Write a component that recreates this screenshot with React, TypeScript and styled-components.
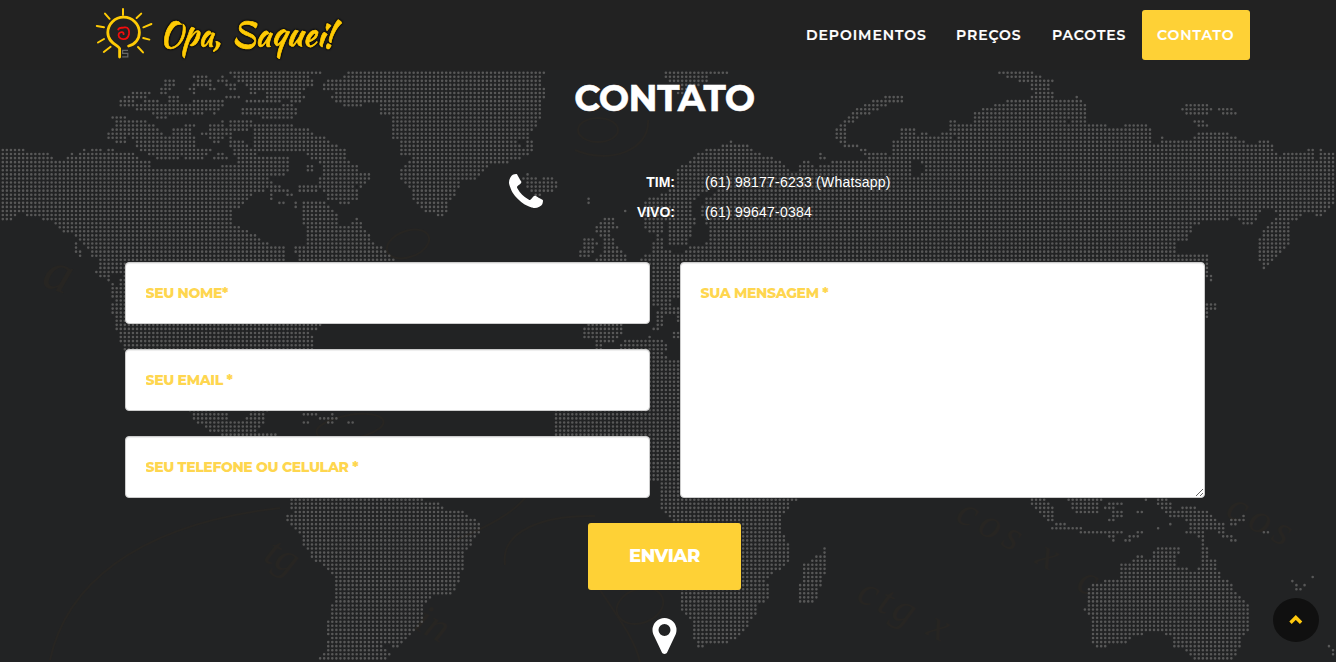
import React from 'react';
import styled, { createGlobalStyle } from 'styled-components';

const GlobalStyle = createGlobalStyle`
  * { box-sizing: border-box; }
  html, body { margin: 0; padding: 0; background: #222; overflow: hidden; }
`;

const YELLOW = '#fed136';
const HEADING = `Montserrat, Inter, 'Liberation Sans', sans-serif`;

/* ---------- dotted world map ---------- */

// Outlines are kept in thirds of a pixel, relative to the origin of each group.
type Group = { x: number; y: number; land: string[]; sea?: string[] };

const GROUPS: Group[] = [
  {
    x: 0,
    y: 60,
    land: [
      // North American mainland
      '0,264 70,264 74,277 150,277 155,289 172,300 195,300 200,289 215,276 235,286 250,264 258,277 285,264 305,264 310,277 330,264 345,275 390,275 415,292 430,304 455,304 460,320 515,325 550,318 590,325 640,325 700,310 720,305 705,290 690,262 690,230 720,238 755,265 770,290 865,290 868,335 850,347 812,350 800,390 760,402 720,440 695,460 695,490 730,505 770,525 805,550 858,555 858,640 298,640 298,598 275,590 275,570 258,570 245,545 225,530 205,520 180,510 165,490 130,482 125,472 85,470 60,455 40,482 0,483',
      '225,545 240,548 240,570 256,595 246,602 234,585 225,575',
      '905,425 975,425 1000,450 1018,462 1018,495 1050,497 1055,485 1070,470 1085,490 1105,520 1115,545 1150,560 1170,580 1190,610 905,610 885,580 880,560 920,550 920,510 905,490',
      '762,190 870,192 900,203 930,205 945,225 975,228 1000,250 1035,265 1037,300 1070,312 1080,337 1112,338 1112,360 1090,370 1085,384 1070,372 1045,365 1078,400 1070,420 1050,434 1018,434 1015,420 980,418 978,398 955,385 955,350 970,340 965,315 940,297 920,293 915,275 762,275',
      // Arctic islands
      '356,115 385,105 395,93 455,95 455,105 440,113 500,130 505,115 515,105 537,110 540,128 575,133 575,155 560,165 465,167 445,155 405,152 395,140 356,140',
      '480,103 480,90 495,57 523,57 523,80 500,103',
      '575,105 567,85 585,70 580,44 612,46 635,57 635,78 650,84 648,92 625,90 605,80 590,85 588,105',
      '651,66 668,44 685,60 712,78 712,92 690,90 675,68',
      '686,33 965,33 962,44 935,46 942,80 905,90 916,110 906,128 870,128 860,115 830,128 733,128 733,118 790,117 800,100 785,90 755,105 735,78 710,62',
      '675,106 720,106 720,117 675,117',
      '723,142 845,142 845,130 866,130 892,142 890,165 880,177 785,177 780,164 723,166',
      '578,118 670,118 672,138 655,152 645,166 630,152 605,166 578,162',
      '335,167 378,167 380,180 440,180 455,194 480,204 490,228 510,228 520,204 550,206 550,192 587,192 580,215 587,262 635,265 620,290 590,300 560,298 550,285 535,298 470,298 455,286 430,278 410,262 405,240 385,230 380,250 345,248 320,238 325,212 345,204',
      '600,225 600,212 625,210 630,192 660,192 668,180 675,205 690,180 757,180 757,200 735,212 700,216 685,228 670,240 655,250 635,246 625,230',
      '638,288 665,277 686,290 682,300 638,300',
      '808,362 820,370 832,372 865,386 882,405 860,410 840,396 820,400 818,420 808,414',
      '893,374 950,374 950,397 893,397',
      '466,167 500,167 500,177 466,177',
      '832,424 856,424 856,433 832,433',
      '881,424 891,424 891,446 881,446',
      '918,315 940,315 940,334 918,334',
      // Greenland
      '1050,33 1637,33 1627,50 1627,80 1637,92 1637,112 1620,118 1627,160 1610,200 1590,215 1590,235 1600,242 1598,265 1590,290 1550,298 1525,310 1470,310 1465,325 1440,345 1425,360 1390,360 1380,385 1362,408 1345,430 1343,458 1330,472 1310,470 1300,458 1275,458 1250,430 1235,415 1226,380 1210,368 1198,357 1198,325 1222,305 1235,290 1198,290 1198,248 1210,240 1175,238 1175,165 1140,165 1130,130 1050,140 1030,138 1010,127 990,110 1000,97 968,90 968,68 985,57 1030,55 1035,44',
    ],
    sea: ['585,200 605,200 605,262 585,262', '645,304 680,304 680,314 645,314', '1555,240 1570,240 1575,260 1560,260', '405,118 425,118 425,128 405,128'],
  },
  {
    x: 350,
    y: 60,
    land: [
      '515,350 530,340 540,350 575,358 580,350 612,350 626,370 620,390 600,398 575,400 573,408 550,408 540,395 528,372 515,360',
      '710,408 722,408 722,434 710,434',
      '821,448 830,448 830,458 821,458',
      '760,472 795,472 795,495 808,500 780,520 795,545 808,565 830,582 832,606 733,606 735,595 760,575 760,545 748,520 735,515 735,500 750,485',
      '700,533 735,533 745,550 730,575 715,590 686,592 686,570 700,560',
    ],
  },
  {
    x: 600,
    y: 60,
    land: [
      '192,32 386,32 386,44 327,46 327,68 290,80 250,106 228,100 228,88 240,68 205,68 192,50',
      // Eurasia
      '133,425 160,408 195,400 225,370 230,325 260,310 290,280 330,265 365,256 400,240 408,250 445,254 450,264 480,280 530,300 560,318 570,338 600,338 595,318 610,300 632,302 640,325 680,313 705,303 740,305 790,303 800,290 880,290 878,242 905,228 903,205 945,205 955,225 975,205 990,225 1022,228 1022,217 1048,215 1048,180 1070,180 1074,192 1130,192 1120,178 1120,155 1155,144 1195,130 1230,120 1280,120 1290,106 1305,94 1290,84 1280,68 1256,66 1255,52 1205,50 1195,33 1302,33 1320,48 1362,58 1350,85 1365,105 1370,117 1425,117 1430,105 1445,117 1460,132 1460,178 1450,192 1520,192 1530,203 1570,203 1573,192 1630,192 1656,204 1656,250 1680,252 1680,228 1695,240 1778,240 1780,228 1795,228 1795,216 1886,216 1900,230 1925,243 1970,252 1975,240 1995,240 2020,254 2035,285 2050,278 2095,278 2110,287 2120,266 2142,266 2142,298 2158,298 2158,264 2168,276 2210,276 2210,430 2185,445 2170,468 2145,468 2140,457 2110,465 2090,482 2072,485 2070,545 2055,568 2030,590 2005,618 1988,630 1985,605 1974,600 1974,545 1990,510 2020,485 2040,462 2055,458 2022,455 2005,445 1985,447 1962,493 1926,493 1905,472 1880,482 1820,484 1785,495 1770,520 1760,543 1735,547 1732,575 1750,585 1765,570 1790,590 1803,572 1825,585 1825,640 243,640 120,610 120,595 132,583 155,583 155,560 165,530 170,515 145,515 133,500',
      '705,205 730,180 755,155 790,132 828,118 878,106 912,106 912,126 870,130 840,150 795,165 765,180 740,200 740,225 738,245 775,253 775,265 730,265 715,245 705,230',
      '775,265 802,265 802,275 860,277 860,290 800,290 785,280',
      '656,278 668,278 680,298 656,298',
    ],
    sea: [
      '275,430 295,408 345,385 352,395 320,412 302,445 302,470 325,500 318,558 275,557 255,578 215,578 205,555 265,552 278,515 290,480 275,455',
      '188,486 206,490 206,550 190,575 185,530',
      '942,305 960,290 972,330 960,348 938,345',
      '1062,225 1068,225 1068,240 1062,240',
    ],
  },
  {
    x: 940,
    y: 60,
    land: [
      '722,144 735,132 805,132 817,148 805,164 735,164',
      '833,143 865,143 892,156 890,164 845,162',
      '760,180 797,180 807,200 773,200',
    ],
    sea: ['375,180 390,180 390,190 375,190'],
  },
  {
    x: 0,
    y: 240,
    land: [
      '298,60 400,60 400,330 372,330 370,305 357,290 345,265 345,228 333,222 333,188 345,180 333,165 333,125 318,118 298,112 285,98',
      '345,240 968,240 968,260 950,272 932,278 942,292 942,330 380,330 360,300',
      '563,500 685,515 690,540 735,542 748,518 760,500 805,500 795,540 782,565 770,577 832,580 832,600 660,600 660,578 635,575 612,560 585,545',
      '900,510 952,518 952,530 905,530',
      '955,530 985,530 990,517 1000,517 1015,530 1015,541 955,541',
      '905,543 928,543 928,552 905,552',
      '980,541 1002,541 1002,552 980,552',
      '1041,543 1064,543 1064,552 1041,552',
    ],
    sea: ['335,125 370,105 350,100 330,110', '350,120 358,120 358,138 350,138'],
  },
  {
    x: 520,
    y: 230,
    land: [
      '360,92 375,72 480,72 480,205 455,205 455,228 390,228 390,95',
      '420,230 480,230 480,277 470,277 466,252 432,252 432,285 412,290 418,300 396,300 396,292 412,280 408,246',
      '188,292 205,280 308,280 308,312 290,326 275,337 247,340 247,360 224,360 224,328 188,328',
      '456,303 480,303 480,328 456,328',
      '384,317 393,317 393,326 384,326',
    ],
  },
  {
    x: 560,
    y: 480,
    land: [
      // Africa
      '178,-410 203,-422 310,-422 324,-405 324,-392 310,-380 324,-362 800,-362 800,0 718,55 690,75 665,110 665,158 677,165 690,205 688,245 665,272 640,275 615,300 627,320 627,355 615,370 593,370 590,403 565,437 540,465 505,492 435,494 432,504 412,504 398,475 398,432 362,390 362,335 330,120 300,90 300,5 265,5 -28,-130 -15,-140 -15,-207 178,-360',
      '788,200 800,200 800,270 785,310 772,355 758,370 715,370 715,312 728,305 728,250 752,248 764,228 788,225',
    ],
  },
  {
    x: 200,
    y: 480,
    land: [
      '270,50 670,50 672,66 718,66 745,90 792,90 805,115 830,115 842,128 842,160 820,178 805,208 793,225 792,270 778,297 770,332 742,346 695,348 675,370 672,415 655,443 620,470 597,503 560,500 560,507 574,522 555,546 353,546 358,528 380,510 380,485 390,470 380,458 380,420 392,413 392,372 403,365 403,285 375,260 345,248 325,210 305,198 305,165 285,150 258,125 258,102 280,95 270,78',
    ],
    sea: ['552,492 574,492 574,503 552,503'],
  },
  {
    x: 940,
    y: 480,
    land: [
      '270,54 314,54 330,75 342,82 342,126 320,124 298,98 282,78 270,74',
      '333,140 345,127 380,127 380,140 430,141 430,152 502,152 502,162 418,162 415,150 333,150',
      '382,54 490,54 478,70 478,102 416,100 393,88 393,70 382,64',
      '492,84 505,66 550,66 550,78 524,82 532,92 550,92 550,112 530,112 525,126 503,126 515,105 505,88',
      '588,92 610,92 610,101 588,101',
      '503,152 550,152 550,162 524,170 524,186 515,186 503,172',
      '552,176 563,165 590,164 590,153 610,153 610,162 588,175 572,186 552,186',
      '614,54 623,54 623,64 614,64',
      '650,141 660,141 660,150 650,150',
      '686,127 696,127 696,137 686,137',
      '650,54 672,54 694,70 694,92 722,92 724,78 770,80 772,92 805,92 820,105 832,118 854,128 854,160 834,160 830,150 800,152 795,172 772,172 765,162 735,162 745,145 735,118 690,112 675,98 650,75',
      '845,163 878,165 892,176 892,186 870,186 868,175 845,173',
      '870,116 905,116 906,102 916,102 916,127 892,127 890,137 870,137',
      '966,153 990,153 990,162 966,162',
      '638,212 650,202 720,202 720,222 708,225 710,250 722,262 745,264 750,277 770,270 785,250 783,165 795,165 797,200 807,203 807,235 830,237 832,270 845,290 867,298 880,325 892,345 917,360 930,382 930,455 907,475 902,495 890,515 882,542 762,542 745,515 722,500 735,485 710,505 698,503 698,475 675,467 655,450 612,455 610,467 575,470 565,492 502,492 500,503 466,503 466,492 455,490 455,410 430,393 430,383 442,378 442,322 466,312 503,300 540,290 540,248 562,252 578,240 590,226 612,226 615,237 638,237',
      '1053,298 1062,298 1062,308 1053,308',
      '1064,311 1074,311 1074,323 1086,323 1088,311 1098,311 1098,320 1086,333 1064,333',
      '1113,287 1123,287 1123,296 1113,296',
      '1161,494 1171,494 1171,504 1161,504',
      '1173,506 1184,506 1184,528 1173,528',
    ],
  },
  {
    x: 1180,
    y: 200,
    land: ['75,180 87,180 87,222 98,224 98,244 88,244 75,232', '75,308 112,308 112,331 87,331 87,356 75,356'],
  },
];

type Poly = { xs: number[]; ys: number[]; l: number; r: number; t: number; b: number };

const toPoly = (g: Group) => (s: string): Poly => {
  const pts = s.split(' ').map((p) => p.split(',').map(Number));
  const xs = pts.map((p) => g.x + p[0] / 3);
  const ys = pts.map((p) => g.y + p[1] / 3);
  return { xs, ys, l: Math.min(...xs), r: Math.max(...xs), t: Math.min(...ys), b: Math.max(...ys) };
};

const LAND = GROUPS.flatMap((g) => g.land.map(toPoly(g)));
const SEA = GROUPS.flatMap((g) => (g.sea || []).map(toPoly(g)));

const inside = (p: Poly, x: number, y: number) => {
  if (x < p.l || x > p.r || y < p.t || y > p.b) return false;
  let hit = false;
  for (let i = 0, j = p.xs.length - 1; i < p.xs.length; j = i++) {
    if (p.ys[i] > y !== p.ys[j] > y && x < ((p.xs[j] - p.xs[i]) * (y - p.ys[i])) / (p.ys[j] - p.ys[i]) + p.xs[i]) {
      hit = !hit;
    }
  }
  return hit;
};

const buildDots = () => {
  let d = '';
  for (let r = 0; r < 146; r++) {
    const y = 72.7 + r * 4.067;
    for (let c = 0; c < 328; c++) {
      const x = 2.8 + c * 4.068;
      if (LAND.some((p) => inside(p, x, y)) && !SEA.some((p) => inside(p, x, y))) {
        d += `M${x.toFixed(2)} ${y.toFixed(2)}h0`;
      }
    }
  }
  return d;
};

const DOTS = buildDots();

const MapLayer = styled.svg`
  position: absolute;
  inset: 0;
  width: 1336px;
  height: 662px;
  z-index: 0;
`;

const WorldMap = () => (
  <MapLayer viewBox="0 0 1336 662" aria-hidden="true">
    <g fill="none" stroke="#272522" strokeWidth="2">
      <path d="M50 660C65 590 130 525 280 508" />
      <path d="M455 540C480 530 520 512 530 490M505 565C500 530 545 515 595 516" />
      <path d="M600 590C620 620 635 640 640 662M575 150C610 165 650 150 648 120" />
      <ellipse cx="598" cy="130" rx="20" ry="12" />
      <ellipse cx="408" cy="244" rx="22" ry="13" transform="rotate(-20 408 244)" />
      <ellipse cx="640" cy="606" rx="24" ry="17" transform="rotate(-20 640 606)" />
      <ellipse cx="350" cy="427" rx="34" ry="12" transform="rotate(-10 350 427)" />
    </g>
    <g fill="#272522" fontFamily="'Liberation Serif', serif" fontStyle="italic" fontSize="42">
      <text transform="translate(954 520) rotate(28)" letterSpacing="6">cos x</text>
      <text transform="translate(1224 515) rotate(28)" letterSpacing="6">cos</text>
      <text transform="translate(855 600) rotate(26)" letterSpacing="4">ctg x</text>
      <text transform="translate(262 560) rotate(28)">tg</text>
      <text transform="translate(412 628) rotate(28)">in</text>
      <text transform="translate(40 285) rotate(20)" fontSize="56">a</text>
      <text transform="translate(1075 590) rotate(20)">c</text>
    </g>
    <path d={DOTS} stroke="#585858" strokeWidth="2.6" strokeLinecap="round" fill="none" />
  </MapLayer>
);

/* ---------- layout ---------- */

const Page = styled.div`
  position: relative;
  width: 1336px;
  height: 662px;
  overflow: hidden;
  background: #222324;
`;

const Header = styled.header`
  position: relative;
  z-index: 1;
  display: flex;
  justify-content: space-between;
  align-items: center;
  height: 70px;
  padding: 0 86px 0 80px;
  background: #222;
`;

const Logo = styled.svg`
  width: 280px;
  height: 70px;
`;

const LogoText = styled.g`
  fill: #ffcb05;
  stroke: #ffcb05;
  stroke-width: 0.7px;
  font: 34.5px 'Kaushan Script', 'Liberation Serif', serif;
  filter: drop-shadow(0 0 0.8px #000) drop-shadow(0.5px 0.8px 0.5px #000);
`;

const Nav = styled.nav`
  display: flex;
`;

const NavLink = styled.a<{ $w: number; $active?: boolean }>`
  display: flex;
  align-items: center;
  width: ${(p) => p.$w}px;
  height: 50px;
  padding-left: 15px;
  border-radius: 3px;
  background: ${(p) => (p.$active ? YELLOW : 'transparent')};
  color: #fff;
  font: 600 14px/20px ${HEADING};
  letter-spacing: 0.95px;
  -webkit-text-stroke: 0.2px #fff;
  white-space: nowrap;
`;

const Section = styled.main`
  position: relative;
  z-index: 1;
  display: flex;
  flex-direction: column;
  align-items: center;
  width: 1330px;
`;

const Title = styled.h2`
  margin: 7px 1px 0 0;
  color: #fff;
  font: 700 36px/42px ${HEADING};
  letter-spacing: -0.5px;
  -webkit-text-stroke: 0.5px #fff;
`;

const Phones = styled.div`
  display: flex;
  width: 1080px;
  height: 95px;
  margin-top: 48px;
`;

const PhoneIcon = styled.svg`
  width: 34px;
  height: 34px;
  margin: 7px 0 0 384px;
`;

const PhoneList = styled.dl`
  display: grid;
  grid-template-columns: 132px auto;
  grid-auto-rows: 30px;
  column-gap: 30px;
  margin: 0;
  color: #fff;
  font: 14px/30px 'Liberation Sans', Arial, sans-serif;
`;

const Label = styled.dt`
  text-align: right;
  font-weight: 700;
`;

const Value = styled.dd`
  margin: 0;
  letter-spacing: 0.23px;
  white-space: nowrap;
`;

const Form = styled.form`
  display: grid;
  grid-template-columns: 525px 525px;
  column-gap: 30px;
`;

const Fields = styled.div`
  display: flex;
  flex-direction: column;
  gap: 25px;
`;

const fieldStyle = `
  display: block;
  width: 100%;
  margin: 0;
  padding: 20px 20px 20px 19.5px;
  border: 1px solid #ccc;
  border-radius: 4px;
  background: #fff;
  box-shadow: inset 0 1px 1px rgba(0, 0, 0, 0.075);
  font: 800 14px/20px ${HEADING};
  letter-spacing: -0.36px;
  outline: none;
  &::placeholder { color: #fed64f; opacity: 1; }
`;

const Input = styled.input`
  ${fieldStyle}
  height: 62px;
`;

const Message = styled.textarea`
  ${fieldStyle}
  height: 236px;
  resize: vertical;
`;

const Submit = styled.button`
  width: 153px;
  height: 67px;
  margin: 25px 1px 0 0;
  padding: 0 0 2px;
  border: 0;
  border-radius: 3px;
  background: ${YELLOW};
  color: #fff;
  font: 800 18px/24px ${HEADING};
  letter-spacing: -0.4px;
`;

const Pin = styled.svg`
  width: 25px;
  height: 36px;
  margin: 28px 1px 0 0;
`;

const ToTop = styled.a`
  position: absolute;
  z-index: 2;
  left: 1273px;
  top: 598px;
  display: flex;
  align-items: center;
  justify-content: center;
  width: 46px;
  height: 44px;
  border-radius: 50%;
  background: #101010;
`;

const LogoMark = () => (
  <Logo viewBox="80 0 280 70" aria-label="Opa, Saquei!">
    <g fill="none" stroke="#ffcb05" strokeLinecap="round">
      <path strokeWidth="2.8" d="M119.6 57V48.5C118.7 45.5 107.8 43 107.8 32.5A15.8 15.3 0 0 1 139.4 32.5C139.4 39 135 44.5 128.6 46" />
      <path strokeWidth="2" d="M123 9V15M105 13.6L109.6 18.8M141.2 13.6L136.6 18M96.8 26L104 27.3M151.4 24L143.4 27.3M98 42.5L104 39M149.4 39.6L143.2 38M103.8 52L110.6 46.8M143 52.4L138 47" />
    </g>
    <path d="M118.2 29.5C119.6 26.6 122.2 28.4 124.4 27.4C128.4 26.6 129.6 30.5 129 34C128.2 38 125.8 39.4 123 39.2C119.2 38.9 117.6 35.8 119 33.4C120.6 31.4 123.8 31.6 123.6 34.2" fill="none" stroke="#f00d0d" strokeWidth="1.8" strokeLinecap="round" />
    <path d="M128 50.3H122.6V53.4H127.8V56.8H122.2" fill="none" stroke="#666" strokeWidth="1.2" />
    <LogoText>
      <text x="160" y="46" textLength="61" lengthAdjust="spacingAndGlyphs">Opa,</text>
      <text x="231.5" y="46" textLength="103" lengthAdjust="spacingAndGlyphs">Saquei!</text>
    </LogoText>
  </Logo>
);

export default function App() {
  return (
    <Page>
      <GlobalStyle />
      <WorldMap />
      <Header>
        <LogoMark />
        <Nav>
          <NavLink $w={150}>DEPOIMENTOS</NavLink>
          <NavLink $w={96}>PREÇOS</NavLink>
          <NavLink $w={105}>PACOTES</NavLink>
          <NavLink $w={108} $active>CONTATO</NavLink>
        </Nav>
      </Header>
      <Section>
        <Title>CONTATO</Title>
        <Phones>
          <PhoneIcon viewBox="0 0 1408 1408">
            <path
              fill="#fff"
              d="M1408 1112q0 27-10 70.5t-21 68.5q-21 50-122 106-94 51-186 51-27 0-53-3.5t-57.5-12.5-47-14.5-55.5-20.5-49-18q-98-35-175-83-127-79-264-216t-216-264q-48-77-83-175-3-9-18-49t-20.5-55.5-14.5-47-12.5-57.5-3.5-53q0-92 51-186 56-101 106-122 25-11 68.5-21t70.5-10q14 0 21 3 18 6 53 76 11 19 30 54t35 63.5 31 53.5q3 4 17.5 25t21.5 35.5 7 28.5q0 20-28.5 50t-62 55-62 53-28.5 46q0 9 5 22.5t8.5 20.5 14 24 11.5 19q76 137 174 235t235 174q2 1 19 11.5t24 14 20.5 8.5 22.5 5q18 0 46-28.5t53-62 55-62 50-28.5q14 0 28.5 7t35.5 21.5 25 17.5q25 15 53.5 31t63.5 35 54 30q70 35 76 53 3 7 3 21z"
            />
          </PhoneIcon>
          <PhoneList>
            <Label>TIM:</Label>
            <Value>(61) 98177-6233 (Whatsapp)</Value>
            <Label>VIVO:</Label>
            <Value>(61) 99647-0384</Value>
          </PhoneList>
        </Phones>
        <Form>
          <Fields>
            <Input placeholder="SEU NOME*" />
            <Input placeholder="SEU EMAIL *" />
            <Input placeholder="SEU TELEFONE OU CELULAR *" />
          </Fields>
          <Message placeholder="SUA MENSAGEM *" />
        </Form>
        <Submit>ENVIAR</Submit>
        <Pin viewBox="0 0 1024 1536">
          <path
            fill="#fff"
            d="M768 512q0-106-75-181t-181-75-181 75-75 181 75 181 181 75 181-75 75-181zm256 0q0 109-33 179l-364 774q-16 33-47.5 52t-67.5 19-67.5-19-46.5-52l-365-774q-33-70-33-179 0-212 150-362t362-150 362 150 150 362z"
          />
        </Pin>
      </Section>
      <ToTop>
        <svg width="14" height="10" viewBox="0 0 14 10">
          <path d="M1.5 7.8L6.8 2.5L12.1 7.8" fill="none" stroke="#ffc90e" strokeWidth="3.4" />
        </svg>
      </ToTop>
    </Page>
  );
}
